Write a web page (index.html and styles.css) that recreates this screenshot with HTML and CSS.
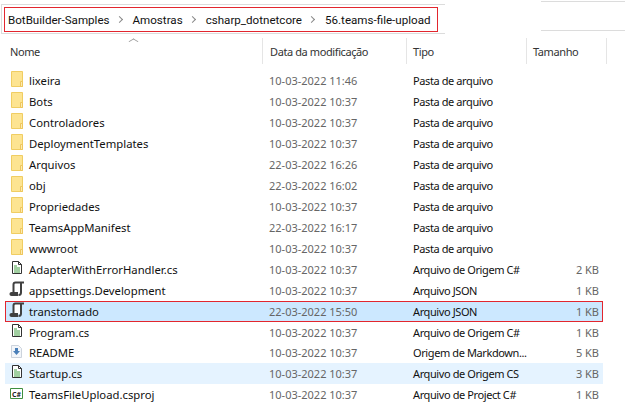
FILE: index.html
```html
<!DOCTYPE html>
<html lang="en">
<head>
    <meta charset="UTF-8">
    <title>56.teams-file-upload</title>
    <link rel="stylesheet" href="styles.css">
</head>
<body>
    <svg class="defs" width="0" height="0">
        <symbol id="folder" viewBox="0 0 18 17">
            <path d="M3.500.500h11v15h-11z" fill="#fde491" stroke="#f0cd62"/>
            <path d="M12.500 10.500h2v5h-2z" fill="#fdebb0" stroke="#eec65c"/>
        </symbol>
        <symbol id="cs" viewBox="0 0 18 17">
            <path d="M4.500 1.500h6l3 3v9h-9z" fill="#fff" stroke="#333"/>
            <path d="M10.500 1.500v3h3" fill="none" stroke="#333"/>
            <path d="M6 6h3M6 8h6M6 10h6M6 12h6" stroke="#45a045"/>
        </symbol>
        <symbol id="json" viewBox="0 0 18 17">
            <path d="M5.500 2h7.500v10H5.500z" fill="#fff"/>
            <path d="M16 1.500H7.500C6 1.500 5.500 2.300 5.500 3.500V12M13 2v9.500c0 1.500-1 2.500-2.500 2.500" fill="none" stroke="#404040" stroke-width="2"/>
            <path d="M3.500 11h6.500v4H3.500C2.300 15 1.500 14.300 1.500 13s.8-2 2-2z" fill="#404040"/>
        </symbol>
        <symbol id="md" viewBox="0 0 18 17">
            <path d="M3.500 2.500h7l3 3v9h-10z" fill="#f3f6fa" stroke="#ccd3dc"/>
            <path d="M7 5h3v3h2l-3.500 4L5 8h2z" fill="#4a7fb8"/>
        </symbol>
        <symbol id="csproj" viewBox="0 0 18 17">
            <path d="M2.500 3.500h12v10h-12z" fill="#fff" stroke="#3f8f3f"/>
            <text x="8.500" y="11.500" text-anchor="middle" class="csharp">C#</text>
        </symbol>
    </svg>

    <div class="address">
        <div class="address-box">
            <div class="crumbs">
                <span>BotBuilder-Samples</span><i></i>
                <span>Amostras</span><i></i>
                <span>csharp_dotnetcore</span><i></i>
                <span>56.teams-file-upload</span>
            </div>
        </div>
        <div class="search"></div>
    </div>

    <div class="sort-arrow"></div>

    <div class="head">
        <div class="name">Nome</div>
        <div class="date">Data da modificação</div>
        <div class="type">Tipo</div>
        <div class="size">Tamanho</div>
    </div>

    <div class="list">
        <div class="row"><div class="name"><svg class="ico"><use href="#folder"/></svg>lixeira</div><div class="date">10-03-2022 11:46</div><div class="type">Pasta de arquivo</div><div class="size"></div></div>
        <div class="row"><div class="name"><svg class="ico"><use href="#folder"/></svg>Bots</div><div class="date">10-03-2022 10:37</div><div class="type">Pasta de arquivo</div><div class="size"></div></div>
        <div class="row"><div class="name"><svg class="ico"><use href="#folder"/></svg>Controladores</div><div class="date">10-03-2022 10:37</div><div class="type">Pasta de arquivo</div><div class="size"></div></div>
        <div class="row"><div class="name"><svg class="ico"><use href="#folder"/></svg>DeploymentTemplates</div><div class="date">10-03-2022 10:37</div><div class="type">Pasta de arquivo</div><div class="size"></div></div>
        <div class="row"><div class="name"><svg class="ico"><use href="#folder"/></svg>Arquivos</div><div class="date">22-03-2022 16:26</div><div class="type">Pasta de arquivo</div><div class="size"></div></div>
        <div class="row"><div class="name"><svg class="ico"><use href="#folder"/></svg>obj</div><div class="date">22-03-2022 16:02</div><div class="type">Pasta de arquivo</div><div class="size"></div></div>
        <div class="row"><div class="name"><svg class="ico"><use href="#folder"/></svg>Propriedades</div><div class="date">10-03-2022 10:37</div><div class="type">Pasta de arquivo</div><div class="size"></div></div>
        <div class="row"><div class="name"><svg class="ico"><use href="#folder"/></svg>TeamsAppManifest</div><div class="date">22-03-2022 16:17</div><div class="type">Pasta de arquivo</div><div class="size"></div></div>
        <div class="row"><div class="name"><svg class="ico"><use href="#folder"/></svg>wwwroot</div><div class="date">10-03-2022 10:37</div><div class="type">Pasta de arquivo</div><div class="size"></div></div>
        <div class="row"><div class="name"><svg class="ico"><use href="#cs"/></svg>AdapterWithErrorHandler.cs</div><div class="date">10-03-2022 10:37</div><div class="type">Arquivo de Origem C#</div><div class="size">2 KB</div></div>
        <div class="row"><div class="name"><svg class="ico"><use href="#json"/></svg>appsettings.Development</div><div class="date">10-03-2022 10:37</div><div class="type">Arquivo JSON</div><div class="size">1 KB</div></div>
        <div class="row selected"><div class="name"><svg class="ico"><use href="#json"/></svg>transtornado</div><div class="date">22-03-2022 15:50</div><div class="type">Arquivo JSON</div><div class="size">1 KB</div></div>
        <div class="row"><div class="name"><svg class="ico"><use href="#cs"/></svg>Program.cs</div><div class="date">10-03-2022 10:37</div><div class="type">Arquivo de Origem C#</div><div class="size">1 KB</div></div>
        <div class="row"><div class="name"><svg class="ico"><use href="#md"/></svg>README</div><div class="date">10-03-2022 10:37</div><div class="type">Origem de Markdown...</div><div class="size">5 KB</div></div>
        <div class="row hovered"><div class="name"><svg class="ico"><use href="#cs"/></svg>Startup.cs</div><div class="date">10-03-2022 10:37</div><div class="type">Arquivo de Origem CS</div><div class="size">3 KB</div></div>
        <div class="row"><div class="name"><svg class="ico"><use href="#csproj"/></svg>TeamsFileUpload.csproj</div><div class="date">10-03-2022 10:37</div><div class="type">Arquivo de Project C#</div><div class="size">1 KB</div></div>
    </div>
</body>
</html>
```

FILE: styles.css
```css
/* General Page Styling */
body {
    font-family: 'Noto Sans', 'Open Sans', sans-serif;
    font-size: 11px;
    color: #111;
    background-color: #fff;
    margin: 0;
    width: 625px;
    height: 408px;
    overflow: hidden;
    position: relative;
}

.defs {
    position: absolute;
}

/* Address Bar */
.address {
    display: flex;
    align-items: flex-start;
    height: 38px;
}

.address-box {
    width: 444px;
    height: 30px;
    margin: 4px 0 0 1px;
    box-sizing: border-box;
    padding: 2px 7px 1px 2px;
    border: 1px solid #dcdcdc;
    border-right: none;
}

.crumbs {
    display: flex;
    align-items: center;
    height: 25px;
    width: 434px;
    box-sizing: border-box;
    padding-left: 3px;
    border: 1px solid #e2262e;
    font-family: Roboto, sans-serif;
    font-size: 11.600px;
    white-space: nowrap;
}

/* breadcrumb chevron */
.crumbs i {
    flex: none;
    width: 4px;
    height: 4px;
    margin: 0 11px 0 7px;
    border-top: 1px solid #888;
    border-right: 1px solid #888;
    transform: rotate(45deg);
}

.search {
    width: 84px;
    height: 30px;
    margin: 1px 0 0 96px;
    box-sizing: border-box;
    border-top: 1px solid #dcdcdc;
    border-bottom: 1px solid #dcdcdc;
}

.sort-arrow {
    position: absolute;
    left: 130px;
    top: 38px;
    width: 6px;
    height: 6px;
    border-left: 1px solid #999;
    border-top: 1px solid #999;
    transform: scaleY(.6) rotate(45deg);
}

/* Column Header */
.head {
    display: flex;
    height: 26px;
    margin: 0 0 6.500px 5px;
    letter-spacing: -.4px;
    color: #333;
}

.head > div {
    display: flex;
    align-items: center;
    box-sizing: border-box;
    color: #333;
    border-right: 1px solid #e5e5e5;
    font-size: 11px;
}

.head .name {
    width: 258px;
    padding-left: 5px;
}

.head .date {
    width: 144px;
    padding-left: 7px;
}

.head .type {
    width: 120px;
    padding-left: 6px;
}

.head .size {
    width: 80px;
    padding-left: 6px;
}

/* Rows */
.row {
    display: flex;
    align-items: center;
    height: 20.930px;
    width: 598px;
    margin-left: 5px;
    white-space: nowrap;
}

.name {
    display: flex;
    align-items: center;
    width: 264px;
    padding-left: 3px;
    box-sizing: border-box;
    font-size: 11.300px;
}

.date {
    width: 144px;
    color: #666;
}

.type {
    width: 113px;
    letter-spacing: -.4px;
}

.size {
    width: 73px;
    text-align: right;
    color: #666;
}

.ico {
    width: 18px;
    height: 17px;
    margin: -2px 3px 0 0;
    flex: none;
}

.csharp {
    font-size: 7px;
    font-weight: bold;
    fill: #222;
}

/* Selected and hover states */
.selected {
    background-color: #cce8ff;
    box-shadow: inset 0 0 0 1px #e2262e;
}

.hovered {
    background-color: #e5f3ff;
}
```
